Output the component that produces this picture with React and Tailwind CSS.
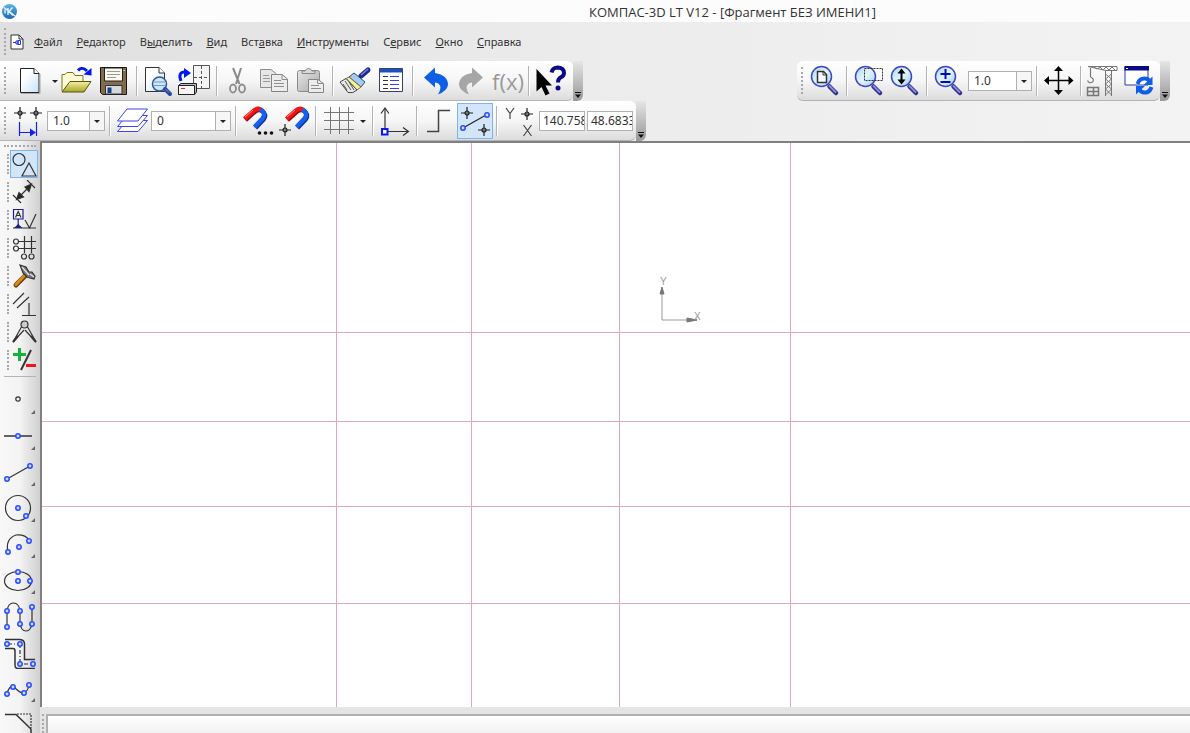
import React, { useState } from 'react';

const menuItems = [
    ['', 'Ф', 'айл'],
    ['', 'Р', 'едактор'],
    ['В', 'ы', 'делить'],
    ['', 'В', 'ид'],
    ['Вст', 'а', 'вка'],
    ['', 'И', 'нструменты'],
    ['С', 'е', 'рвис'],
    ['', 'О', 'кно'],
    ['', 'С', 'правка'],
];

// Gradients shared by all the icons
const Defs = () => (
    <svg className="absolute size-0" aria-hidden="true">
        <defs>
            <linearGradient id="paper" x1="0" y1="0" x2="1" y2="1">
                <stop offset="0.3" stopColor="#ffffff" />
                <stop offset="1" stopColor="#c4e2fb" />
            </linearGradient>
            <linearGradient id="lens" x1="0" y1="0" x2="1" y2="1">
                <stop offset="0" stopColor="#a9d8fb" />
                <stop offset="0.5" stopColor="#e2f5ff" />
                <stop offset="1" stopColor="#9ccdf8" />
            </linearGradient>
            <linearGradient id="folder" x1="0" y1="0" x2="0" y2="1">
                <stop offset="0" stopColor="#f3f0a0" />
                <stop offset="1" stopColor="#a9a52c" />
            </linearGradient>
            <linearGradient id="grey" x1="0" y1="0" x2="1" y2="1">
                <stop offset="0" stopColor="#e8e8e8" />
                <stop offset="1" stopColor="#a8a8a8" />
            </linearGradient>
            <linearGradient id="logo" x1="0" y1="0" x2="0" y2="1">
                <stop offset="0" stopColor="#5cb5e8" />
                <stop offset="1" stopColor="#1a68b0" />
            </linearGradient>
        </defs>
    </svg>
);

const Icon = ({ children }) => (
    <svg width="36" height="32" viewBox="0 0 36 32" fill="none" aria-hidden="true">{children}</svg>
);

const Node = ({ x, y }) => (
    <circle cx={x} cy={y} r="2.200" fill="#bfe0ff" stroke="#2a48ff" strokeWidth="1.500" />
);

const Cross = ({ x, y }) => (
    <g stroke="#222" strokeWidth="1.200">
        <path d={`M${x - 6} ${y}h12M${x} ${y - 6}v12`} />
        <circle cx={x} cy={y} r="2" fill="#777" />
    </g>
);

const Lens = ({ children }) => (
    <>
        <path d="M22.500 21.500L29 28" stroke="#33338f" strokeWidth="4.500" strokeLinecap="round" />
        <path d="M22.500 21L28.500 27" stroke="#8c8cdc" strokeWidth="1.800" strokeLinecap="round" />
        <circle cx="14.500" cy="11.500" r="10" fill="url(#lens)" stroke="#4048c0" strokeWidth="1.500" />
        {children}
    </>
);

const Magnet = () => (
    <>
        <g strokeWidth="4.500">
            <path d="M6.500 15L16 6.500Q20 3.500 23.500 6" stroke="#8a0a14" />
            <path d="M22.500 5.300Q28.500 9.500 24.500 14.500L16.500 23" stroke="#0c2f90" />
            <path d="M5.500 14L15 5.500Q19 2.500 22.500 5" stroke="#f01616" />
            <path d="M21.500 4.300Q27.500 8.500 23.500 13.500L15.500 22" stroke="#1660f0" />
        </g>
        <path d="M6 12L14 5" stroke="#ff8a7a" />
    </>
);

const icons = {
    create: (
        <Icon>
            <path d="M8.500 3.500H22L27 8.500V27.500H8.500Z" fill="url(#paper)" stroke="#222" />
            <path d="M22 3.500V8.500H27" fill="#fff" stroke="#222" />
            <path d="M28 9V28.500H9" stroke="#aaa" />
        </Icon>
    ),
    open: (
        <Icon>
            <path d="M1 26V9.500H4L6 7.500H12L14 10.500H22V16" fill="#fffbd5" stroke="#77761a" />
            <path d="M1 27L9 16.500H30L23 27Z" fill="url(#folder)" stroke="#55540f" />
            <path d="M17 5.500Q21 1 26 6" stroke="#0018f0" strokeWidth="3" />
            <path d="M22.500 9.500L30.500 3V10.500Z" fill="#0018f0" />
        </Icon>
    ),
    save: (
        <Icon>
            <path d="M3.500 2.500H29.500V29.500H5.500L3.500 27.500Z" fill="#806b4a" stroke="#1c1710" />
            <path d="M7.500 3H25.500V16H7.500Z" fill="#f8f8ee" stroke="#222" />
            <path d="M10 6.500H23M10 9.500H23M10 12.500H19" stroke="#999" />
            <path d="M8.500 20.500H25V29H8.500Z" fill="#d5d8df" stroke="#333" />
            <path d="M10.500 22.500H14.500V28H10.500Z" fill="#14438a" />
            <path d="M26.500 5.500H28" stroke="#ddd" />
        </Icon>
    ),
    preview: (
        <Icon>
            <path d="M4.500 2.500H18L23.500 8V26.500H4.500Z" fill="url(#paper)" stroke="#333" />
            <path d="M18 2.500V8H23.500" fill="#fff" stroke="#333" />
            <circle cx="18.500" cy="19" r="7" fill="#c9e7ff" stroke="#33559a" strokeWidth="1.500" />
            <path d="M13 17H24M13 20.500H24" stroke="#7899b8" />
            <path d="M24 24L29 29" stroke="#2747a0" strokeWidth="4" strokeLinecap="round" />
            <path d="M24.500 24L28 27.500" stroke="#7d97dd" />
        </Icon>
    ),
    print: (
        <Icon>
            <path d="M16.500 .5H32.500V23.500H16.500Z" fill="#f4f4f4" stroke="#555" />
            <path d="M24.500 1V23M17 12.500H32" stroke="#555" strokeDasharray="3 2" />
            <path d="M4 16Q.5 7 8 7" stroke="#0018f0" strokeWidth="3" />
            <path d="M7 3L14 8L7 13Z" fill="#0018f0" />
            <path d="M1.500 20.500L4 18.500H19.500V27L17.500 29.500H1.500Z" fill="#bbb" stroke="#222" />
            <path d="M1.500 20.500H17.500V29.500H1.500Z" fill="#f4f4f4" stroke="#222" />
            <path d="M4 23.500H8" stroke="#e22" />
        </Icon>
    ),
    cut: (
        <Icon>
            <path d="M12 3L18.500 19M20 3L15 19" stroke="#8b8b8b" strokeWidth="2" />
            <ellipse cx="12" cy="23.500" rx="3" ry="4" stroke="#8b8b8b" strokeWidth="1.800" />
            <ellipse cx="21" cy="23.500" rx="3" ry="4" stroke="#8b8b8b" strokeWidth="1.800" />
        </Icon>
    ),
    copy: (
        <Icon>
            <path d="M3.500 4.500H14L19.500 9V22.500H3.500Z" fill="#e6e6e6" stroke="#8d8d8d" />
            <path d="M6 10.500H12M6 13.500H13M6 16.500H13" stroke="#999" />
            <path d="M14.500 9.500H25L30.500 14V26.500H14.500Z" fill="#ececec" stroke="#858585" />
            <path d="M25 9.500V14.500H30.500M17 15.500H24M17 18.500H27M17 21.500H27" stroke="#8d8d8d" />
        </Icon>
    ),
    paste: (
        <Icon>
            <rect x="4.500" y="5.500" width="22" height="21" rx="2" fill="url(#grey)" stroke="#8a8a8a" />
            <path d="M9 8.500V6H12Q13 3.500 15.500 3.500T19 6H22V8.500Z" fill="#d8d8d8" stroke="#888" />
            <path d="M15.500 14.500H25L30.500 18.500V27.500H15.500Z" fill="#ececec" stroke="#858585" />
            <path d="M24.500 14.500V18.500H30.500M18 20.500H26M18 23.500H28" stroke="#8d8d8d" />
        </Icon>
    ),
    brush: (
        <Icon>
            <path d="M24 11L31 5" stroke="#222a88" strokeWidth="5" strokeLinecap="round" />
            <path d="M24 10L31 4" stroke="#7187e6" strokeWidth="1.500" />
            <path d="M17 8L28 17L24 22L12 12Z" fill="#a4cbf6" stroke="#2c4a78" />
            <path d="M12 12L24 22L20 25L9 13.500Z" fill="#f4ef9e" stroke="#77713b" />
            <path d="M9 13.500L20 25Q16 29 11 27.500L3 17Z" fill="#e8e8e8" stroke="#444" />
            <path d="M8 16L14 25M12 17L17 25M6 19L10 25" stroke="#555" />
        </Icon>
    ),
    props: (
        <Icon>
            <path d="M6.500 3.500H29.500V26.500H6.500Z" fill="#fff" stroke="#35415e" />
            <path d="M7 4H29V7.500H7Z" fill="#1c51c4" />
            <path d="M10 11.500H15M10 15.500H15M10 19.500H15M10 23.500H15" stroke="#333" />
            <path d="M17 11.500H26M17 15.500H26M17 19.500H26M17 23.500H26" stroke="#3c3cf4" strokeWidth="1.200" />
        </Icon>
    ),
    undo: (
        <Icon>
            <path d="M7 12.500L18 2.500V8Q31 10 31 20Q30 26 21 29.500Q27 19 18 17.500V22.500Z" fill="#0f5fe6" />
        </Icon>
    ),
    redo: (
        <Icon>
            <path d="M30 12.500L19 2.500V8Q6 10 6 20Q7 26 16 29.500Q10 19 19 17.500V22.500Z" fill="#a6a6a6" />
        </Icon>
    ),
    help: (
        <Icon>
            <path d="M3.500 4V26.500L8.500 22L12.500 30.500L16.500 28.500L12.500 20.500H19Z" fill="#000" />
            <path d="M18.500 7.500Q19.500 2.500 25 2.500Q31 3 31 8Q31 11 27.500 12.500Q25 14 25 17.500" stroke="#0a0a82" strokeWidth="4" />
            <circle cx="25" cy="23" r="2.500" fill="#0a0a82" />
        </Icon>
    ),
    step: (
        <Icon>
            <Cross x={10} y={8} />
            <Cross x={26} y={8} />
            <path d="M9.500 17V31M26.500 17V31M10 27.500H25" stroke="#1420f0" strokeWidth="1.200" />
            <path d="M20 23.500L26 27.500L20 31.500Z" fill="#1420f0" />
        </Icon>
    ),
    layers: (
        <Icon>
            <g fill="#fff" stroke="#3a44f0">
                <path d="M3.500 26.500L13 15.500H33.500L24 26.500Z" />
                <path d="M3.500 21.500L13 10.500H33.500L24 21.500Z" />
                <path d="M3.500 16L13 4H33.500L24 16Z" />
            </g>
        </Icon>
    ),
    snap: (
        <Icon>
            <g transform="translate(-1 0)"><Magnet /></g>
            <g fill="#111">
                <circle cx="19.500" cy="28" r="1.800" />
                <circle cx="25.500" cy="28" r="1.800" />
                <circle cx="31.500" cy="28" r="1.800" />
            </g>
        </Icon>
    ),
    snapPoint: (
        <Icon>
            <g transform="translate(5 0)"><Magnet /></g>
            <Cross x={9} y={25} />
        </Icon>
    ),
    grid: (
        <Icon>
            <path d="M10.500 2V29M19.500 2V29M28.500 2V29M4 7.500H34M4 15.500H34M4 24.500H34" stroke="#777" />
        </Icon>
    ),
    axes: (
        <Icon>
            <path d="M8 23V3M11 26.500H31" stroke="#333" strokeWidth="1.200" />
            <path d="M4 8.500L8 3L12 8.500M26 22.500L31.500 26.500L26 30.500" stroke="#333" strokeWidth="1.200" />
            <path d="M5 24H10.500V29.500H5Z" fill="#fff" stroke="#0a18ee" strokeWidth="2" />
        </Icon>
    ),
    ortho: (
        <Icon>
            <path d="M6 26.500H17.500V5.500H29" stroke="#444" strokeWidth="1.500" />
        </Icon>
    ),
    round: (
        <Icon>
            <path d="M6 23L29 10" stroke="#222" strokeWidth="1.200" />
            <Cross x={10} y={8} />
            <Cross x={27} y={25} />
            <Node x={6} y={23} />
            <Node x={30} y={10} />
        </Icon>
    ),
    coords: (
        <Icon>
            <path d="M5 3L9 8.500L13 3M9 8.500V14" stroke="#444" strokeWidth="1.200" />
            <path d="M22.500 20L30.500 31M30.500 20L22.500 31" stroke="#444" strokeWidth="1.200" />
            <Cross x={26} y={9} />
        </Icon>
    ),
    fit: (
        <Icon>
            <Lens>
                <path d="M10.500 6.500H16.500L19.500 9.500V17.500H10.500Z" fill="#f6fbff" stroke="#333" strokeWidth="1.500" />
                <path d="M16 6.500V10H19.500" stroke="#333" />
            </Lens>
        </Icon>
    ),
    zoomWindow: (
        <Icon>
            <Lens>
                <path d="M13.500 3.500H31.500V15.500H13.500Z" stroke="#333" strokeDasharray="2 1" />
            </Lens>
        </Icon>
    ),
    zoomDynamic: (
        <Icon>
            <Lens>
                <path d="M14.500 7V17" stroke="#000" strokeWidth="2" />
                <path d="M10.500 8.500L14.500 3.500L18.500 8.500ZM10.500 14.500L14.500 19.500L18.500 14.500Z" fill="#000" />
            </Lens>
        </Icon>
    ),
    zoomStep: (
        <Icon>
            <Lens>
                <path d="M9.500 9H19.500M14.500 4V14M9.500 17H19.500" stroke="#0a0aa6" strokeWidth="2" />
            </Lens>
        </Icon>
    ),
    pan: (
        <Icon>
            <path d="M17.500 5V27M6 15.500H30" stroke="#000" strokeWidth="1.500" />
            <path d="M13 6L17.500 1L22 6ZM13 25L17.500 30L22 25ZM8 11L3 15.500L8 20ZM27.500 11L32.500 15.500L27.500 20Z" fill="#000" />
        </Icon>
    ),
    crane: (
        <Icon>
            <g stroke="#777">
                <path d="M3 1.500H32V5.500H21L3 1.500" />
                <path d="M9 2L12 4L15 2L18 5L21 2L24 5L27 2L30 5" />
                <path d="M20.500 6V31M26.500 6V31M20.500 9L26.500 14L20.500 19L26.500 24L20.500 30M26.500 9L20.500 14L26.500 19L20.500 24L26.500 30" />
                <path d="M5.500 3V12M5.500 12Q10 14 7.500 17Q4 19 2.500 15.500" strokeWidth="1.200" />
                <path d="M2.500 22.500H13.500V30.500H2.500ZM8.500 22.500V30.500M2.500 26.500H13.500" strokeWidth="1.500" />
            </g>
        </Icon>
    ),
    refresh: (
        <Icon>
            <path d="M4 2H27V20H4Z" fill="#fff" stroke="#2a3aa0" />
            <path d="M3.500 1H28V5.500H3.500Z" fill="#0a0a82" />
            <path d="M5 3.500H7" stroke="#fff" />
            <path d="M16.500 19Q18.500 13 24 13.500Q27.500 13.500 28.500 17" stroke="#0f5fe6" strokeWidth="4" />
            <path d="M31.500 11.500V20H22.500Z" fill="#0f5fe6" />
            <path d="M30.500 22Q28.500 28 23.500 27.500Q19.500 27.500 18.500 24" stroke="#0f5fe6" strokeWidth="4" />
            <path d="M15 29.500V21H24Z" fill="#0f5fe6" />
        </Icon>
    ),
};

const panels = [
    ['Геометрия', (
        <>
            <circle cx="7" cy="7.500" r="6" />
            <path d="M17 11L24 24H10Z" />
        </>
    )],
    ['Размеры', (
        <>
            <path d="M1 15L9 23M15 0L23 8" />
            <path d="M7 17L17 7" />
            <path d="M4.500 19.500L7 12.500L11.500 17ZM19.500 4L13 7L17 11.500Z" fill="#222" />
        </>
    )],
    ['Обозначения', (
        <>
            <path d="M1.500 1.500H11V11H1.500Z" stroke="#1a1a9c" />
            <path d="M3.500 9.500L6.200 3.500L9 9.500M4.500 7.500H8" />
            <path d="M6.200 11V18" stroke="#1a1a9c" />
            <path d="M2 20L6.200 16L10.500 20Z" fill="#1a1a9c" stroke="none" />
            <path d="M1 20H24M13 12L17.500 20L24 6" />
        </>
    )],
    ['Обозначения для строительства', (
        <>
            <path d="M7 5.500H24M7 12.500H24M12.500 0V17M19.500 0V17" />
            <circle cx="4" cy="5.500" r="2.500" />
            <circle cx="4" cy="12.500" r="2.500" />
            <circle cx="12" cy="20.500" r="2.500" />
            <circle cx="19.500" cy="20.500" r="2.500" />
        </>
    )],
    ['Редактирование', (
        <>
            <path d="M4 21L13 12" stroke="#6b430c" strokeWidth="5" strokeLinecap="round" />
            <path d="M4 20.500L12 12" stroke="#d98a1c" strokeWidth="3" strokeLinecap="round" />
            <path d="M8 1L14 3L17 8L20 8L23 12L22 15L18 14L15 13L11 9Z" fill="#777" />
            <path d="M10 3L17 11M18 10L22 13" stroke="#e4e4e4" />
        </>
    )],
    ['Параметризация', (
        <path d="M1 12L12 1M5 16L17 5M17 11V23M10 23.500H24" />
    )],
    ['Измерения', (
        <>
            <path d="M10 6L1 22L12 10M15 6L24 22L13 10" fill="#eee" />
            <circle cx="12.500" cy="4.500" r="3.500" fill="#ccc" />
            <path d="M1 22L6 16M24 22L19 16" strokeWidth="2" />
        </>
    )],
    ['Выделение', (
        <>
            <path d="M1 6.500H14M7.500 0V13" stroke="#12b43c" strokeWidth="3" />
            <path d="M19 2L9 22" strokeWidth="2" />
            <path d="M14 17.500H24" stroke="#f01414" strokeWidth="3" />
        </>
    )],
];

const tools = [
    ['Точка', true, <circle cx="18" cy="18" r="2.200" />],
    ['Вспомогательная прямая', true, (
        <>
            <path d="M4 19H32" strokeWidth="1.500" />
            <Node x={18} y={19} />
        </>
    )],
    ['Отрезок', true, (
        <>
            <path d="M7 26L30 13" />
            <Node x={7} y={26} />
            <Node x={30} y={13} />
        </>
    )],
    ['Окружность', true, (
        <>
            <circle cx="18" cy="19" r="12.500" />
            <Node x={18} y={19} />
            <Node x={26} y={27} />
        </>
    )],
    ['Дуга', true, (
        <>
            <path d="M8 27Q5 14 16 10Q25 9 29 15" />
            <Node x={8} y={27} />
            <Node x={19} y={22} />
            <Node x={29} y={16} />
        </>
    )],
    ['Эллипс', true, (
        <>
            <ellipse cx="18" cy="20" rx="13.500" ry="9.500" />
            <Node x={18} y={11} />
            <Node x={18} y={20} />
            <Node x={30} y={20} />
        </>
    )],
    ['Непрерывный ввод объектов', false, (
        <>
            <path d="M7 31V14Q8 6 13.500 6T20 14V26Q21 34 26 34T32 26V11" />
            <Node x={7} y={14} />
            <Node x={7} y={30} />
            <Node x={20} y={14} />
            <Node x={20} y={27} />
            <Node x={32} y={10} />
            <Node x={32} y={27} />
        </>
    )],
    ['Линия', false, (
        <>
            <path d="M5 6.500H20Q24.500 7 24.500 11V26.500H35M5 15.500H13Q15 15.500 15 18V32Q15 35.500 18 35.500H35" strokeWidth="1.500" />
            <path d="M8 11H20V31H32" strokeDasharray="4 2 1 2" />
            <Node x={7} y={11} />
            <Node x={20} y={11} />
            <Node x={20} y={31} />
            <Node x={33} y={31} />
        </>
    )],
    ['Кривая Безье', true, (
        <>
            <path d="M7 25Q9 16 14 18Q21 25 24 24Q28 22 29 16" />
            <Node x={7} y={25} />
            <Node x={13} y={18} />
            <Node x={24} y={24} />
            <Node x={29} y={16} />
        </>
    )],
    ['Фаска', true, (
        <>
            <path d="M5 9.500H16L31 24V35" strokeWidth="1.500" />
            <path d="M17 9H31V23" strokeDasharray="2 1" />
        </>
    )],
];

const Grip = () => (
    <span className="w-[10px] shrink-0 self-stretch py-1.5 pl-1">
        <span className="block h-full w-0 border-l-2 border-dotted border-[#a8a8a8]" />
    </span>
);

const Sep = () => <span className="mx-[3px] h-[30px] w-0.5 shrink-0 border-r border-l border-r-white border-l-[#b4b4b4]" />;

const Tool = ({ label, active, children }) => (
    <button
        type="button"
        aria-label={label}
        title={label}
        className={`flex h-9 w-9 shrink-0 items-center justify-center ${active ? 'bg-[#d3e6f9] outline outline-1 -outline-offset-1 outline-[#7fb5ec]' : 'hover:bg-[#e3effb]'}`}
    >
        {children}
    </button>
);

const Arrow = () => (
    <svg width="12" height="12" viewBox="0 0 12 12" aria-hidden="true"><path d="M3 5H9L6 8Z" fill="#222" /></svg>
);

const DropArrow = ({ label }) => (
    <button type="button" aria-label={label} className="flex h-9 w-[13px] shrink-0 items-center justify-center"><Arrow /></button>
);

const Combo = ({ label, options, width }) => (
    <span className={`relative mx-px h-5 shrink-0 ${width}`}>
        <select
            aria-label={label}
            className="block size-full appearance-none border border-[#b0b0b0] bg-white pl-[5px] font-['Noto_Sans',sans-serif] text-xs leading-[18px] text-[#333] outline-none"
        >
            {options.map((option) => <option key={option}>{option}</option>)}
        </select>
        <span className="pointer-events-none absolute inset-y-0 right-0 flex w-4 items-center justify-center border border-[#b0b0b0] bg-[#f6f6f6]">
            <Arrow />
        </span>
    </span>
);

const Coord = ({ label, value, onChange }) => (
    <input
        type="text"
        aria-label={label}
        value={value}
        onChange={(e) => onChange(e.target.value)}
        className="mr-0.5 h-5 w-[46px] shrink-0 border border-[#b0b0b0] bg-white pl-[3px] font-['Noto_Sans',sans-serif] text-xs text-[#333] outline-none"
    />
);

const Toolbar = ({ label, round, children }) => (
    <div role="toolbar" aria-label={label} className="flex h-10 shrink-0">
        <div className={`flex items-center rounded-r-md border-b border-[#b4b4b4] bg-linear-to-b from-white via-[#f6f6f6] to-[#dcdcdc] ${round ? 'rounded-l-md' : ''}`}>
            {children}
        </div>
        <button type="button" aria-label="Параметры панели" className="flex w-[10px] items-end justify-center rounded-br-md bg-linear-to-b from-[#e6e6e6] to-[#989898] pb-0.5">
            <svg width="8" height="8" viewBox="0 0 8 8" aria-hidden="true">
                <path d="M1 1.500H7" stroke="#111" />
                <path d="M1 3.500H7L4 7Z" fill="#111" />
            </svg>
        </button>
    </div>
);

const Drawing = () => (
    <svg className="block size-full" fill="none" role="img" aria-label="Фрагмент">
        <g stroke="#e0a8be" shapeRendering="crispEdges">
            {[294, 429, 577, 748].map((x) => <line key={x} x1={x} x2={x} y1="0" y2="100%" />)}
            {[189, 278, 363, 460].map((y) => <line key={y} x1="0" x2="100%" y1={y} y2={y} />)}
        </g>
        <path d="M620 146V177H655" stroke="#999" />
        <path d="M620 144L618 151H622ZM655 177L645 175V179Z" fill="#777" stroke="#777" />
        <g fill="#999" fontSize="10" fontFamily="Liberation Sans, sans-serif">
            <text x="618" y="142">Y</text>
            <text x="652" y="177">X</text>
        </g>
    </svg>
);

function App() {
    const [x, setX] = useState('140.7583');
    const [y, setY] = useState('48.6833');
    const [panel, setPanel] = useState('Геометрия');

    return (
        <div className="flex h-screen flex-col overflow-hidden bg-[#e6e6e6] font-['Noto_Sans',sans-serif] text-[#333]">
            <Defs />

            <header className="flex h-[22px] shrink-0 items-center bg-[#fcfcfc]">
                <svg className="ml-px" width="17" height="17" viewBox="0 0 17 17" fill="none" aria-hidden="true">
                    <circle cx="8.500" cy="8.500" r="7.500" fill="url(#logo)" />
                    <path d="M4 6.500V10.500M7 5V12M11.500 4.500L8 8.500L12 12.500M3 4.500L14 13" stroke="#e6f4ff" strokeWidth="1.400" />
                </svg>
                <h1 className="ml-[571px] pt-0.5 font-['Open_Sans','Noto_Sans',sans-serif] text-[13px] leading-5 whitespace-nowrap">КОМПАС-3D LT V12 - [Фрагмент БЕЗ ИМЕНИ1]</h1>
            </header>

            <div className="shrink-0 bg-linear-to-r from-[#dfdfdf] via-[#ececec] to-[#f3f3f3]">
                <nav className="flex h-[39px] items-center">
                    <Grip />
                    <svg width="14" height="16" viewBox="0 0 14 16" fill="none" aria-hidden="true">
                        <path d="M1 1H9L13 5V15H1Z" fill="#fff" stroke="#333" />
                        <path d="M9 1V5H13" stroke="#333" />
                        <path d="M3 8.500H6M6 7H8V10H6ZM8 6.500H10.500V10.500H8Z" stroke="#2030f0" />
                    </svg>
                    <ul className="ml-2.5 flex gap-3.5 text-[11px] leading-4">
                        {menuItems.map(([before, key, after]) => (
                            <li key={before + key + after}>
                                <button type="button">{before}<span className="underline">{key}</span>{after}</button>
                            </li>
                        ))}
                    </ul>
                </nav>

                <div className="flex items-start justify-between pr-5">
                    <Toolbar label="Стандартная">
                        <Grip />
                        <span className="w-0.5" />
                        <Tool label="Создать">{icons.create}</Tool>
                        <DropArrow label="Тип документа" />
                        <Tool label="Открыть">{icons.open}</Tool>
                        <Tool label="Сохранить">{icons.save}</Tool>
                        <Sep />
                        <Tool label="Предварительный просмотр">{icons.preview}</Tool>
                        <Tool label="Печать">{icons.print}</Tool>
                        <Sep />
                        <Tool label="Вырезать">{icons.cut}</Tool>
                        <Tool label="Копировать">{icons.copy}</Tool>
                        <Tool label="Вставить">{icons.paste}</Tool>
                        <Sep />
                        <Tool label="Копировать свойства">{icons.brush}</Tool>
                        <Tool label="Свойства">{icons.props}</Tool>
                        <Sep />
                        <Tool label="Отменить">{icons.undo}</Tool>
                        <Tool label="Повторить">{icons.redo}</Tool>
                        <Tool label="Переменные">
                            <span className="pl-0.5 font-['Open_Sans',sans-serif] text-[22px] leading-8 text-[#999]">f(x)</span>
                        </Tool>
                        <Sep />
                        <Tool label="Справка">{icons.help}</Tool>
                        <span className="w-1" />
                    </Toolbar>

                    <Toolbar label="Вид" round>
                        <Grip />
                        <Tool label="Показать все">{icons.fit}</Tool>
                        <Sep />
                        <Tool label="Увеличить масштаб рамкой">{icons.zoomWindow}</Tool>
                        <Tool label="Приблизить или отдалить">{icons.zoomDynamic}</Tool>
                        <Sep />
                        <Tool label="Изменить масштаб">{icons.zoomStep}</Tool>
                        <Combo label="Масштаб" options={['1.0', '2.0', '5.0']} width="w-16" />
                        <Sep />
                        <Tool label="Сдвинуть">{icons.pan}</Tool>
                        <Sep />
                        <Tool label="Перестроить">{icons.crane}</Tool>
                        <Tool label="Обновить изображение">{icons.refresh}</Tool>
                        <span className="w-[3px]" />
                    </Toolbar>
                </div>

                <Toolbar label="Текущее состояние">
                    <Grip />
                    <Tool label="Шаг курсора">{icons.step}</Tool>
                    <Combo label="Шаг" options={['1.0', '5.0', '10.0']} width="w-[58px]" />
                    <Sep />
                    <Tool label="Слои">{icons.layers}</Tool>
                    <Combo label="Слой" options={['0', '1']} width="w-[80px]" />
                    <Sep />
                    <Tool label="Установка привязок">{icons.snap}</Tool>
                    <Tool label="Запретить привязки">{icons.snapPoint}</Tool>
                    <Sep />
                    <Tool label="Сетка">{icons.grid}</Tool>
                    <DropArrow label="Настройка сетки" />
                    <Sep />
                    <Tool label="Локальная система координат">{icons.axes}</Tool>
                    <Sep />
                    <Tool label="Ортогональное черчение">{icons.ortho}</Tool>
                    <Tool label="Округление" active>{icons.round}</Tool>
                    <Sep />
                    <Tool label="Координаты курсора">{icons.coords}</Tool>
                    <span className="w-0.5" />
                    <Coord label="X" value={x} onChange={setX} />
                    <Coord label="Y" value={y} onChange={setY} />
                    <span className="w-px" />
                </Toolbar>
            </div>

            <div className="flex min-h-0 flex-1">
                <aside className="w-10 shrink-0 overflow-hidden bg-linear-to-r from-[#f8f8f8] via-[#f3f3f3] to-[#d0d0d0]">
                    <div className="mx-1 h-[9px] pt-1"><div className="border-t-2 border-dotted border-[#a8a8a8]" /></div>
                    {panels.map(([label, art]) => (
                        <div key={label} className="flex h-7">
                            <span className="w-[10px] shrink-0 py-1 pl-[7px]">
                                <span className="block h-full w-0 border-l-2 border-dotted border-[#a8a8a8]" />
                            </span>
                            <button
                                type="button"
                                aria-label={label}
                                title={label}
                                aria-pressed={panel === label}
                                onClick={() => setPanel(label)}
                                className={`h-7 w-7 border pl-px ${panel === label ? 'border-[#7fb5ec] bg-[#d3e6f9]' : 'border-transparent'}`}
                            >
                                <svg width="25" height="25" viewBox="0 0 25 25" fill="none" stroke="#333" strokeWidth="1.200" aria-hidden="true">{art}</svg>
                            </button>
                        </div>
                    ))}
                    <div className="mx-1 mt-0.5 mb-1 border-t border-[#b4b4b4]" />
                    {tools.map(([label, more, art]) => (
                        <button key={label} type="button" aria-label={label} title={label} className="block h-9 w-10">
                            <svg width="40" height="36" viewBox="0 0 40 36" fill="none" stroke="#333" strokeWidth="1.200" aria-hidden="true">
                                {art}
                                {more && <path d="M35 29V33H31Z" fill="#666" stroke="none" />}
                            </svg>
                        </button>
                    ))}
                </aside>

                <div className="flex min-w-0 flex-1 flex-col">
                    <main className="min-h-0 flex-1 border-t-2 border-l-2 border-[#808080] bg-white">
                        <Drawing />
                    </main>
                    <footer className="flex h-[26px] shrink-0 bg-[#e4e4e4] pt-[7px]">
                        <span className="ml-0.5 w-1 border-l-2 border-dotted border-[#a8a8a8]" />
                        <div className="flex-1 border-t-2 border-l-2 border-[#b0b0b0] bg-linear-to-b from-white to-[#f2f2f2]" />
                    </footer>
                </div>
            </div>
        </div>
    );
}

export default App;
